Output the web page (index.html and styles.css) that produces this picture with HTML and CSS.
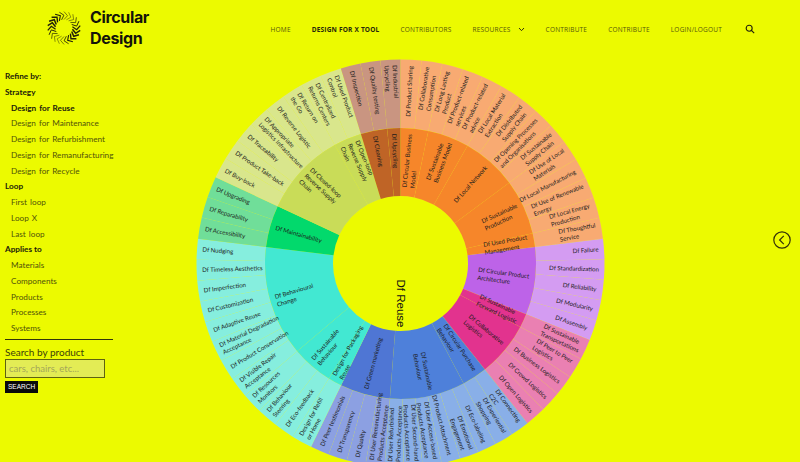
FILE: index.html
```html
<!DOCTYPE html>
<html lang="en">
<head>
<meta charset="utf-8">
<title>Circular Design</title>
<link rel="stylesheet" href="styles.css">
</head>
<body>
<header class="site-header">
  <a class="brand" href="#">
    <svg class="brand-mark" id="logo" viewBox="-17 -17 34 34" aria-hidden="true"></svg>
    <span class="brand-name">Circular<br>Design</span>
  </a>
  <nav class="main-nav">
    <a href="#">Home</a>
    <a href="#" class="is-current">Design for x tool</a>
    <a href="#">Contributors</a>
    <a href="#" class="has-menu">Resources
      <svg class="caret" viewBox="0 0 8 6" aria-hidden="true"><path d="M1 1.2 L4 4.4 L7 1.2"/></svg>
    </a>
    <a href="#">Contribute</a>
    <a href="#">Contribute</a>
    <a href="#">Login/Logout</a>
    <svg class="search-icon" viewBox="0 0 12 12" aria-hidden="true"><circle cx="5" cy="5" r="3.6"/><path d="M7.7 7.7 L11 11"/></svg>
  </nav>
</header>
<main class="layout">
  <aside class="filters">
    <p class="filter-head">Refine by:</p>
    <p class="filter-head">Strategy</p>
    <ul>
      <li class="is-active">Design for Reuse</li>
      <li>Design for Maintenance</li>
      <li>Design for Refurbishment</li>
      <li>Design for Remanufacturing</li>
      <li>Design for Recycle</li>
    </ul>
    <p class="filter-head">Loop</p>
    <ul>
      <li>First loop</li>
      <li>Loop X</li>
      <li>Last loop</li>
    </ul>
    <p class="filter-head">Applies to</p>
    <ul>
      <li>Materials</li>
      <li>Components</li>
      <li>Products</li>
      <li>Processes</li>
      <li>Systems</li>
    </ul>
    <form class="product-search">
      <label for="product">Search by product</label>
      <input id="product" type="text" placeholder="cars, chairs, etc...">
      <button type="button">SEARCH</button>
    </form>
  </aside>
  <div class="chart">
    <svg id="sunburst" viewBox="-204.5 -204.5 409 409" role="img" aria-label="Design for Reuse sunburst"></svg>
  </div>
  <div class="pager">
    <svg class="pager-icon" viewBox="0 0 18 18" aria-hidden="true"><circle cx="9" cy="9" r="8.2"/><path d="M10.8 4.8 L6.6 9 L10.8 13.2"/></svg>
  </div>
</main>
<script src="chart.js"></script>
</body>
</html>
```
FILE: styles.css
```css
* { box-sizing: border-box; }
html, body { height: 100%; }
body {
  margin: 0;
  overflow: hidden;
  background: #ecfa00;
  color: #1c1c00;
  font-family: "Lato", "Liberation Sans", sans-serif;
}
a { color: inherit; text-decoration: none; }

.site-header {
  display: flex;
  align-items: center;
  justify-content: space-between;
  height: 59px;
  padding: 0 45px 1px 47px;
}
.brand { display: flex; align-items: center; gap: 9px; margin-bottom: 3px; }
.brand-mark { width: 34px; height: 34px; }
.brand-mark path { fill: none; stroke: #20200a; }
.brand-name {
  font-family: "Inter", sans-serif;
  font-weight: 700;
  font-size: 16px;
  line-height: 21px;
  letter-spacing: -0.35px;
  color: #14140a;
}
.main-nav {
  display: flex;
  align-items: center;
  gap: 21px;
  font-family: "Open Sans", sans-serif;
  font-size: 6.5px;
  letter-spacing: 0.2px;
  text-transform: uppercase;
  color: #55580a;
}
.main-nav .is-current { color: #26280a; font-weight: 700; }
.has-menu { display: flex; align-items: center; gap: 7px; }
.caret { width: 7px; height: 5px; }
.caret path { fill: none; stroke: #33350a; stroke-width: 1.2; }
.search-icon { width: 10px; height: 10px; margin-left: 2px; }
.search-icon circle, .search-icon path { fill: none; stroke: #20200a; stroke-width: 1.3; }

.layout {
  display: grid;
  grid-template-columns: 196px 409px 1fr;
  height: 403px;
}
.filters { padding: 10px 0 0 5px; font-size: 8.2px; line-height: 15.75px; color: #50530a; }
.filters p, .filters ul { margin: 0; padding: 0; list-style: none; }
.filters li { padding-left: 6px; word-spacing: 1px; }
.filters .is-active { color: #20200a; font-weight: 700; }
.filter-head { color: #20200a; font-weight: 700; }
.product-search {
  display: flex;
  flex-direction: column;
  align-items: flex-start;
  width: 108px;
  margin-top: 2px;
  padding-top: 6px;
  border-top: 1px solid #33350a;
}
.product-search label { font-size: 10px; line-height: 13px; color: #3c3e0a; }
.product-search input {
  width: 100px;
  height: 19px;
  padding: 0 3px;
  border: 1px solid #5f6210;
  border-radius: 0;
  background: #e3ec55;
  font: 9.5px "Lato", sans-serif;
  color: #333;
}
.product-search input::placeholder { color: #a3a75a; }
.product-search button {
  height: 12px;
  margin-top: 3px;
  padding: 0 3px;
  border: 0;
  background: #0a0a0a;
  color: #fff;
  font: 6.5px "Liberation Sans", sans-serif;
}

.chart { height: 403px; overflow: hidden; }
#sunburst { display: block; width: 409px; height: 409px; }
#sunburst .cell { stroke: rgba(255, 255, 255, 0.05); stroke-width: 0.5; }
#sunburst .label { font-family: "Lato", sans-serif; font-size: 6.1px; fill: #1b1b1b; }
#sunburst .root-label { font-family: "Liberation Sans", sans-serif; font-size: 11.5px; fill: #111; }

.pager { padding: 172px 0 0 168px; }
.pager-icon { display: block; width: 18px; height: 18px; }
.pager-icon circle, .pager-icon path { fill: none; stroke: #33300a; stroke-width: 1.2; }
```
FILE: chart.js
```js
var NS = "http://www.w3.org/2000/svg";
var R0 = 67.5, R1 = 135.5, R2 = 204, PAD = 5.5, LEAD = 8;

var sectors = [
  { from: 0, to: 83, inner: "#f6862a", outer: "#f8aa72", groups: [
    { label: "Df Circular Business|Model", kids: ["Df Product Sharing", "Df Collaborative|Consumption"] },
    { label: "Df Sustainable|Business Model", kids: ["Df Long Lasting|Product", "Df Product-related|services", "Df Product-related|advice"] },
    { label: "Df Local Network", kids: ["Df Local Material|Extraction", "Df Distributed|Supply Chain", "Df Opening Processes|and Organisations", "Df Sustainable|Supply Chain"] },
    { label: "Df Sustainable|Production", kids: ["Df Use of Local|Materials", "Df Local Manufacturing", "Df Use of Renewable|Energy", "Df Local Energy|Production"] },
    { label: "Df Used Product|Management", kids: ["Df Thoughtful|Service"] }
  ] },
  { from: 83, to: 112, inner: "#bd63e8", outer: "#d49cf2", groups: [
    { label: "Df Circular Product|Architecture", kids: ["Df Failure", "Df Standardization", "Df Reliability", "Df Modularity", "Df Assembly"] }
  ] },
  { from: 112, to: 141.5, inner: "#e2338e", outer: "#ea80b2", groups: [
    { label: "Df Sustainable|Forward Logistic", kids: ["Df Sustainable|Transportations"] },
    { label: "Df Collaborative|Logistics", kids: ["Df Peer to Peer|Logistics", "Df Business Logistics", "Df Crowd Logistics", "Df Open Logistics"] }
  ] },
  { from: 141.5, to: 206, inner: "#4e80da", outer: "#89afe8", groups: [
    { label: "Df Circular Purchase|Behaviour", kids: ["Df Connecting|C2C", "Df Experiential|Shopping"] },
    { label: "Df Sustainable|Behaviour", kids: ["Df Eco-labeling", "Df Emotional|Engagement", "Df Product Attachment", "Df User Access-based|Products Acceptance", "Df User Second-hand|Products Acceptance", "Df User Refurbished|Products Acceptance"] },
    { label: "Df Green marketing", fill: "#4f76d4", kidFill: "#8ca0e2", kids: ["Df User Remanufacturing|Products Acceptance", "Df Quality", "Df Transparency", "Df Peer testimonials"] }
  ] },
  { from: 206, to: 277, inner: "#42e8d2", outer: "#86eede", groups: [
    { label: "Design for Packaging|Reuse", kids: ["Design for Refill|or Home"] },
    { label: "Df Sustainable|Behaviour", kids: ["Df Eco-feedback", "Df Behaviour|Steering", "Df Resources|Monitors"] },
    { label: "Df Behavioural|Change", kids: ["Df Visible Repair|Acceptance", "Df Product Conservation", "Df Material Degradation|Acceptance", "Df Adaptive Reuse", "Df Customization", "Df Imperfection", "Df Timeless Aesthetics", "Df Nudging"] }
  ] },
  { from: 277, to: 295, inner: "#02d96c", outer: "#70de99", groups: [
    { label: "Df Maintainability", kids: ["Df Accessibility", "Df Reparability", "Df Upgrading"] }
  ] },
  { from: 295, to: 343, inner: "#c9dc58", outer: "#d9e68c", groups: [
    { label: "Df Closed-loop|Reverse Supply|Chain", kids: ["Df Buy-back", "Df Product Take-back", "Df Traceability", "Df Appropriate|Logistics Infrastructure", "Df Reverse Logistic", "Df Return on|the Go"] },
    { label: "Df Open-loop|Reverse Supply|Chain", kids: ["Df Centralized|Returns Centers", "Df Used Product|Control"] }
  ] },
  { from: 343, to: 360, inner: "#bf6426", outer: "#c99581", groups: [
    { label: "Df Cleaning", kids: ["Df Inspection", "Df Quality testing"] },
    { label: "Df Upcycling", kids: ["Df Industrial|Upcycling"] }
  ] }
];

function el(tag, attrs, parent) {
  var n = document.createElementNS(NS, tag);
  for (var k in attrs) n.setAttribute(k, attrs[k]);
  if (parent) parent.appendChild(n);
  return n;
}

function polar(r, deg) {
  var t = deg * Math.PI / 180;
  return (r * Math.sin(t)).toFixed(2) + " " + (-r * Math.cos(t)).toFixed(2);
}

function wedge(parent, a, b, r0, r1, fill) {
  var large = b - a > 180 ? 1 : 0;
  el("path", {
    "class": "cell",
    fill: fill,
    d: "M" + polar(r0, a) + " L" + polar(r1, a) +
       " A" + r1 + " " + r1 + " 0 " + large + " 1 " + polar(r1, b) +
       " L" + polar(r0, b) +
       " A" + r0 + " " + r0 + " 0 " + large + " 0 " + polar(r0, a) + "Z"
  }, parent);
}

function label(parent, text, angle, rOuter) {
  var lines = text.split("|");
  var t = el("text", { "class": "label" }, parent);
  lines.forEach(function (line, i) {
    var s = el("tspan", { x: 0, y: ((i - (lines.length - 1) / 2) * LEAD + 2.1).toFixed(2) }, t);
    s.textContent = line;
  });
  var r = rOuter - PAD;
  if (angle < 180) {
    var w = t.getBBox().width;
    t.setAttribute("transform", "rotate(" + (angle - 90).toFixed(2) + ") translate(" + (r - w).toFixed(2) + " 0)");
  } else {
    t.setAttribute("transform", "rotate(" + (angle + 90).toFixed(2) + ") translate(" + (-r).toFixed(2) + " 0)");
  }
}

function drawSunburst() {
  var svg = document.getElementById("sunburst");
  var cells = el("g", {}, svg);
  var texts = el("g", {}, svg);
  sectors.forEach(function (sector) {
    var total = sector.groups.reduce(function (n, g) { return n + g.kids.length; }, 0);
    var step = (sector.to - sector.from) / total;
    var at = sector.from;
    sector.groups.forEach(function (group) {
      var start = at;
      group.kids.forEach(function (kid) {
        wedge(cells, at, at + step, R1, R2, group.kidFill || sector.outer);
        label(texts, kid, at + step / 2, R2);
        at += step;
      });
      wedge(cells, start, at, R0, R1, group.fill || sector.inner);
      label(texts, group.label, (start + at) / 2, R1);
    });
  });
  var root = el("text", { "class": "root-label", transform: "rotate(90)", x: 16, y: 4 }, texts);
  root.textContent = "Df Reuse";
}

function drawLogo() {
  var svg = document.getElementById("logo");
  var spokes = 22;
  for (var i = 0; i < spokes; i++) {
    var a = i * 360 / spokes;
    var heavy = Math.abs(Math.sin((a - 20) * Math.PI / 180));
    var d = "M" + polar(8.5, a) + " L" + polar(12.8, a + 16) + " L" + polar(16.4, a);
    el("path", { d: d, "stroke-width": (0.45 + 1.05 * heavy * heavy).toFixed(2) }, svg);
  }
}

drawSunburst();
drawLogo();
```
